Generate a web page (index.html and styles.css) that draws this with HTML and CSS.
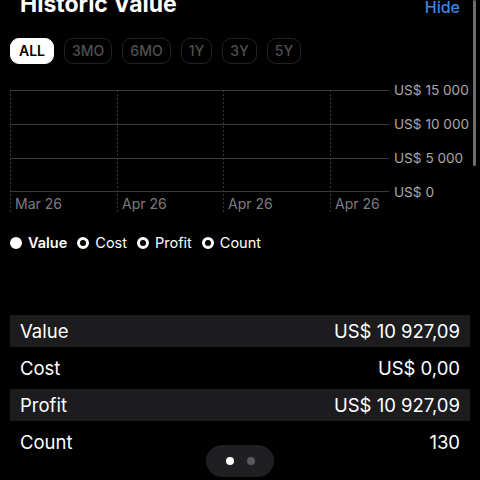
FILE: index.html
```html
<!DOCTYPE html>
<html lang="en">
  <head>
    <meta charset="UTF-8" />
    <meta name="viewport" content="width=device-width, initial-scale=1.0" />
    <title>Historic Value</title>
    <link rel="stylesheet" href="styles.css">
  </head>
  <body>
    <!-- Header -->
    <div class="header">
      <h1>Historic Value</h1>
      <a class="hide" href="#">Hide</a>
    </div>

    <!-- Range picker -->
    <div class="ranges">
      <span class="range active">ALL</span>
      <span class="range">3MO</span>
      <span class="range">6MO</span>
      <span class="range">1Y</span>
      <span class="range">3Y</span>
      <span class="range">5Y</span>
    </div>

    <!-- Chart -->
    <div class="chart">
      <div class="plot">
        <svg class="grid" width="379" height="122" viewBox="0 0 379 122">
          <g stroke="#3a3a3c" stroke-width="1">
            <line x1="0" y1="0.5" x2="379" y2="0.5" />
            <line x1="0" y1="34.5" x2="379" y2="34.5" />
            <line x1="0" y1="68.5" x2="379" y2="68.5" />
            <line x1="0" y1="101.5" x2="379" y2="101.5" />
          </g>
          <g stroke="#3a3a3c" stroke-width="1" stroke-dasharray="2 2">
            <line x1="0.5" y1="0" x2="0.5" y2="122" />
            <line x1="107.5" y1="0" x2="107.5" y2="122" />
            <line x1="213.5" y1="0" x2="213.5" y2="122" />
            <line x1="320.5" y1="0" x2="320.5" y2="122" />
          </g>
        </svg>
        <div class="xaxis">
          <span>Mar 26</span>
          <span>Apr 26</span>
          <span>Apr 26</span>
          <span>Apr 26</span>
        </div>
      </div>
      <div class="yaxis">
        <span>US$ 15 000</span>
        <span>US$ 10 000</span>
        <span>US$ 5 000</span>
        <span>US$ 0</span>
      </div>
    </div>

    <!-- Legend -->
    <div class="legend">
      <span class="key on"><i></i>Value</span>
      <span class="key"><i></i>Cost</span>
      <span class="key"><i></i>Profit</span>
      <span class="key"><i></i>Count</span>
    </div>

    <!-- Totals -->
    <div class="totals">
      <div class="row"><span>Value</span><span>US$ 10 927,09</span></div>
      <div class="row"><span>Cost</span><span>US$ 0,00</span></div>
      <div class="row"><span>Profit</span><span>US$ 10 927,09</span></div>
      <div class="row"><span>Count</span><span>130</span></div>
    </div>

    <!-- Page indicator -->
    <div class="pager">
      <span class="dot current"></span>
      <span class="dot"></span>
    </div>

    <div class="scrollbar"></div>
  </body>
</html>
```

FILE: styles.css
```css
/* Page */
body {
  font-family: "Inter", "Liberation Sans", sans-serif;
  background-color: #000;
  color: #fff;
  margin: 0;
  padding: 0;
  overflow: hidden;
}

/* Header, scrolled up so the title is cut */
.header {
  display: flex;
  justify-content: space-between;
  align-items: center;
  padding: 0 20px;
  margin-top: -11px;
  height: 30px;
}

h1 {
  margin: 0;
  font-size: 23px;
  font-weight: 700;
  line-height: 30px;
}

.hide {
  color: #3a85e6;
  text-decoration: none;
  font-size: 16px;
  font-weight: 500;
  margin-top: 5px;
}

/* Range picker */
.ranges {
  display: flex;
  gap: 10px;
  padding: 0 10px;
  margin-top: 19px;
}

.range {
  height: 24px;
  line-height: 24px;
  padding: 0 7px;
  border: 1px solid #232325;
  border-radius: 9px;
  font-size: 14px;
  font-weight: 500;
  color: #4f4f52;
}

.range.active {
  background-color: #fff;
  border-color: #fff;
  color: #000;
  font-weight: 600;
  padding: 0 8px;
}

/* Chart */
.chart {
  display: flex;
  margin: 26px 0 0 10px;
}

.plot {
  display: grid;
  width: 379px;
  height: 122px;
}

.plot > * {
  grid-area: 1 / 1;
}

.grid {
  display: block;
}

.xaxis {
  display: grid;
  grid-template-columns: 107px 106px 107px 59px;
  align-self: end;
  font-size: 14px;
  line-height: 20px;
  color: #7c7c80;
  margin-bottom: -2px;
}

.xaxis span {
  padding-left: 5px;
}

.yaxis {
  display: flex;
  flex-direction: column;
  gap: 14px;
  margin-top: -10px;
  padding-left: 5px;
  font-size: 13.6px;
  line-height: 20px;
  color: #a8a8ac;
  white-space: nowrap;
}

/* Legend */
.legend {
  display: flex;
  gap: 10px;
  padding: 0 10px;
  margin-top: 21px;
  font-size: 14.5px;
  line-height: 20px;
}

.key {
  display: flex;
  align-items: center;
  gap: 6px;
}

.key i {
  width: 12px;
  height: 12px;
  box-sizing: border-box;
  border: 3px solid #fff;
  border-radius: 50%;
}

.key.on {
  font-weight: 600;
}

.key.on i {
  background-color: #fff;
}

/* Totals table */
.totals {
  display: flex;
  flex-direction: column;
  gap: 5px;
  margin: 62px 10px 0;
}

.row {
  display: flex;
  justify-content: space-between;
  align-items: center;
  height: 32px;
  padding: 0 10px;
  font-size: 18.5px;
}

.row:nth-child(odd) {
  background-color: #1c1c1e;
}

/* Page indicator floats over the list */
.pager {
  position: absolute;
  left: 206px;
  top: 445px;
  width: 68px;
  height: 32px;
  border-radius: 16px;
  background-color: #1f1f21;
  display: flex;
  justify-content: center;
  align-items: center;
  gap: 13px;
}

.dot {
  width: 8px;
  height: 8px;
  border-radius: 50%;
  background-color: #5a5a5e;
}

.dot.current {
  background-color: #fff;
}

.scrollbar {
  position: absolute;
  right: 4px;
  top: 0;
  width: 3px;
  height: 166px;
  border-radius: 2px;
  background-color: #6e6e72;
}
```
